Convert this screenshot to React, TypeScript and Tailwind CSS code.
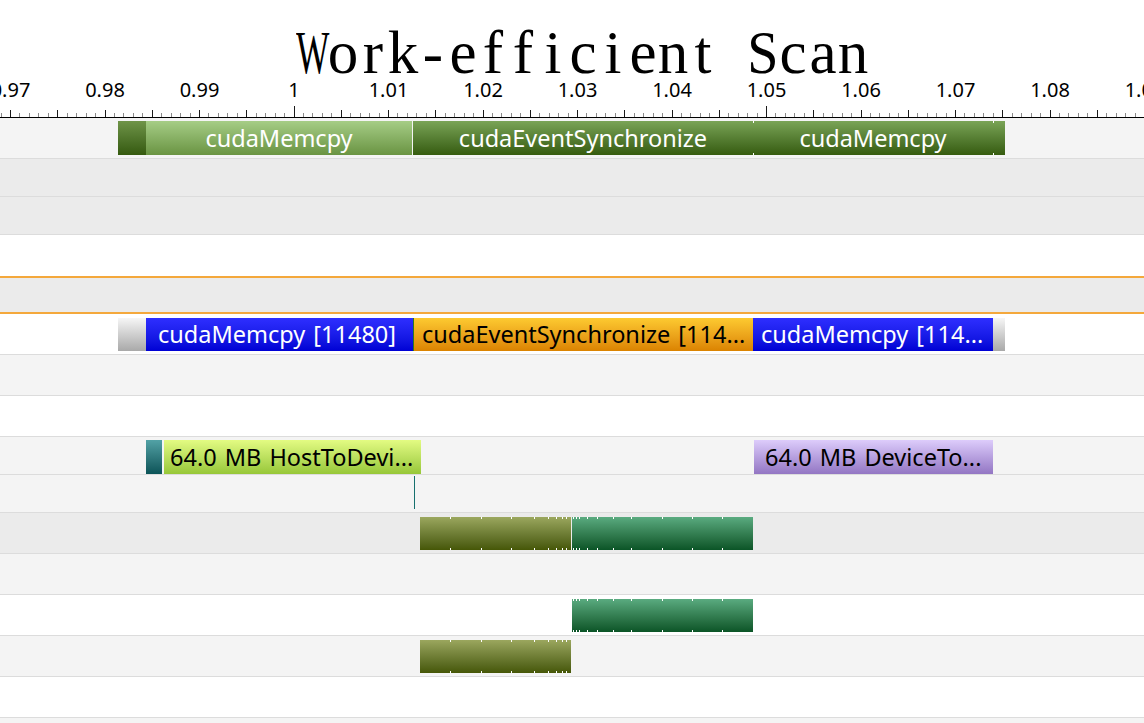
import React from "react";

type Bar = {
  x: number;
  w: number;
  cls: string;
  text?: string;
  align?: "center" | "left";
  pad?: number;
  ticks?: number[];
};

type Row = {
  cls: string;
  top: number;
  bh: number;
  bars: Bar[];
};

const darkGreen = "bg-linear-to-b from-[#7aa456] to-[#365c0e]";
const lightGreen = "bg-linear-to-b from-[#a6cd86] to-[#6a9442]";
const blue = "bg-linear-to-b from-[#2e2eff] to-[#0000d4] text-white";
const orange = "bg-linear-to-b from-[#fdca30] to-[#db8300] text-black";
const gray = "bg-linear-to-b from-[#f6f6f6] to-[#a9a9a9]";
const olive = "bg-linear-to-b from-[#9ba75e] to-[#465706]";
const green = "bg-linear-to-b from-[#5aab80] to-[#0a5527]";

const oliveTicks = [450, 481, 511, 534, 548, 556, 562, 566];
const greenTicks = [573, 576, 579, 587, 597, 613, 631, 662, 692, 722];

const rows: Row[] = [
  {
    cls: "h-[41px] bg-[#f4f4f4] border-b border-[#dcdcdc]",
    top: 3,
    bh: 34,
    bars: [
      { x: 118, w: 28, cls: "bg-linear-to-b from-[#6f9448] to-[#355a0e]" },
      { x: 146, w: 266, cls: lightGreen + " text-white", text: "cudaMemcpy" },
      { x: 413, w: 340, cls: darkGreen + " text-white", text: "cudaEventSynchronize" },
      { x: 753, w: 240, cls: darkGreen + " text-white", text: "cudaMemcpy", ticks: [753] },
      { x: 993, w: 12, cls: darkGreen, ticks: [993] },
    ],
  },
  { cls: "h-[38px] bg-[#ebebeb] border-b border-[#dcdcdc]", top: 0, bh: 0, bars: [] },
  { cls: "h-[38px] bg-[#ebebeb] border-b border-[#dcdcdc]", top: 0, bh: 0, bars: [] },
  { cls: "h-[41px] bg-white", top: 0, bh: 0, bars: [] },
  { cls: "h-[38px] bg-[#ebebeb] border-y-2 border-[#f4a83c]", top: 0, bh: 0, bars: [] },
  {
    cls: "h-[41px] bg-white border-b border-[#dcdcdc]",
    top: 4,
    bh: 33,
    bars: [
      { x: 118, w: 28, cls: gray },
      { x: 146, w: 267, cls: blue, text: "cudaMemcpy [11480]", align: "left", pad: 12 },
      { x: 413, w: 1, cls: "bg-[#2f7a1c]" },
      { x: 414, w: 339, cls: orange, text: "cudaEventSynchronize [114...", align: "left", pad: 8 },
      { x: 753, w: 240, cls: blue, text: "cudaMemcpy [114...", align: "left", pad: 8 },
      { x: 993, w: 12, cls: gray },
    ],
  },
  { cls: "h-[41px] bg-[#f4f4f4] border-b border-[#dcdcdc]", top: 0, bh: 0, bars: [] },
  { cls: "h-[41px] bg-white border-b border-[#dcdcdc]", top: 0, bh: 0, bars: [] },
  {
    cls: "h-[38px] bg-[#f4f4f4] border-b border-[#dcdcdc]",
    top: 3,
    bh: 34,
    bars: [
      { x: 146, w: 16, cls: "bg-linear-to-b from-[#52a2a6] to-[#0a5458]" },
      {
        x: 164,
        w: 257,
        cls: "bg-linear-to-b from-[#e3fb82] to-[#97c738] text-black",
        text: "64.0 MB HostToDevi...",
        align: "left",
        pad: 6,
      },
      {
        x: 754,
        w: 239,
        cls: "bg-linear-to-b from-[#ddccfb] to-[#9376c3] text-black",
        text: "64.0 MB DeviceTo...",
        align: "left",
        pad: 11,
      },
    ],
  },
  {
    cls: "h-[38px] bg-[#f4f4f4] border-b border-[#dcdcdc]",
    top: 1,
    bh: 33,
    bars: [{ x: 414, w: 1, cls: "bg-[#16706e]" }],
  },
  {
    cls: "h-[41px] bg-[#ebebeb] border-b border-[#dcdcdc]",
    top: 4,
    bh: 33,
    bars: [
      { x: 420, w: 151, cls: olive, ticks: oliveTicks },
      { x: 572, w: 181, cls: green, ticks: greenTicks },
    ],
  },
  { cls: "h-[41px] bg-[#f4f4f4] border-b border-[#dcdcdc]", top: 0, bh: 0, bars: [] },
  {
    cls: "h-[41px] bg-white border-b border-[#dcdcdc]",
    top: 4,
    bh: 33,
    bars: [{ x: 572, w: 181, cls: green, ticks: greenTicks }],
  },
  {
    cls: "h-[41px] bg-[#f4f4f4] border-b border-[#dcdcdc]",
    top: 4,
    bh: 33,
    bars: [{ x: 420, w: 151, cls: olive, ticks: oliveTicks }],
  },
  { cls: "h-[41px] bg-white border-b border-[#dcdcdc]", top: 0, bh: 0, bars: [] },
];

// glyphs that are too wide for a 30px cell get squeezed
const squeeze: Record<string, string> = {
  W: "scale-x-[0.58]",
  S: "scale-x-[0.92]",
};

function Title() {
  return (
    <div className="h-[80px] flex justify-center pl-[22px] pt-[29px]">
      <h1
        className="flex text-[61px] leading-[48px] font-normal text-black"
        style={{ fontFamily: "'Liberation Serif', serif" }}
      >
        {"Work-efficient Scan".split("").map((c, i) => (
          <span key={i} className="w-[30px] flex justify-center">
            <span className={`inline-block ${squeeze[c] ?? ""}`}>{c === " " ? "\u00a0" : c}</span>
          </span>
        ))}
      </h1>
    </div>
  );
}

function Ruler() {
  const ticks = [];
  const labels = [];
  for (let k = 969; k <= 1091; k++) {
    const x = 293.5 + (k - 1000) * 9.45;
    const h = k % 50 === 0 ? 11 : k % 5 === 0 ? 7 : 4;
    const major = k % 5 === 0;
    ticks.push(
      <rect
        key={k}
        x={Math.round(x)}
        y={37 - h}
        width={1}
        height={h}
        fill={major ? "#1a1a1a" : "#8a8a8a"}
      />
    );
    if (k % 10 === 0) {
      labels.push(
        <text
          key={"l" + k}
          x={x + 0.5}
          y={17}
          textAnchor="middle"
          fontSize={20}
          fill="#000"
          fontFamily="'Noto Sans', sans-serif"
        >
          {Number((k / 1000).toFixed(2)).toString()}
        </text>
      );
    }
  }
  return (
    <svg width={1144} height={38} className="block">
      {labels}
      {ticks}
      <rect x={0} y={37} width={1144} height={1} fill="#000" />
    </svg>
  );
}

function TimelineBar({ bar, top, h }: { bar: Bar; top: number; h: number }) {
  return (
    <div
      className={`absolute flex items-center overflow-hidden whitespace-nowrap text-[23.5px] leading-none [word-spacing:2px] ${bar.cls} ${
        bar.align === "left" ? "justify-start" : "justify-center"
      }`}
      style={{ left: bar.x, width: bar.w, top, height: h, paddingLeft: bar.pad ?? 0 }}
    >
      {bar.text && <span className="pt-px">{bar.text}</span>}
      {bar.ticks?.map((t) => (
        <React.Fragment key={t}>
          <span className="absolute top-0 h-[2px] w-px bg-white" style={{ left: t - bar.x }} />
          <span className="absolute bottom-0 h-[2px] w-px bg-white" style={{ left: t - bar.x }} />
        </React.Fragment>
      ))}
    </div>
  );
}

export default function App() {
  return (
    <div
      className="w-[1144px] h-[723px] overflow-hidden bg-[#f4f4f4] flex flex-col"
      style={{ fontFamily: "'Noto Sans', 'Open Sans', sans-serif" }}
    >
      <header className="bg-white shrink-0">
        <Title />
        <Ruler />
      </header>
      <main className="flex-1 flex flex-col">
        {rows.map((row, i) => (
          <div key={i} className={`relative shrink-0 ${row.cls}`}>
            {row.bars.map((bar, j) => (
              <TimelineBar key={j} bar={bar} top={row.top} h={row.bh} />
            ))}
          </div>
        ))}
        <div className="flex-1 bg-[#f4f4f4]" />
      </main>
    </div>
  );
}
